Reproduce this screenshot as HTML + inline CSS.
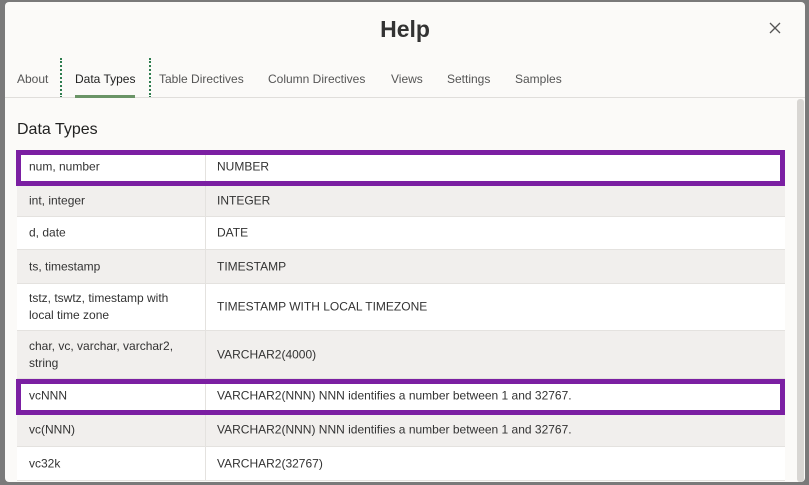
<!DOCTYPE html>
<html><head><meta charset="utf-8"><style>
*{margin:0;padding:0;box-sizing:border-box}
body{width:809px;height:485px;background:#7a7a7a;font-family:"Liberation Sans",sans-serif;overflow:hidden;position:relative}
.dlg{position:absolute;left:5px;top:2px;width:800px;height:480px;background:#fbfaf8;border-radius:4px;overflow:hidden}
.title{position:absolute;left:0;width:800px;top:14px;text-align:center;font-size:23px;font-weight:bold;color:#333}
.x{position:absolute;left:764px;top:20px}
.tab{position:absolute;top:70px;font-size:12px;color:#555;white-space:nowrap}
.tabline{position:absolute;left:0;top:95px;width:800px;height:1px;background:#e0dedb}
.dot{position:absolute;top:56px;height:40px;border-left:2px dotted #2e7d4f}
.ul{position:absolute;left:70px;top:93px;width:60px;height:3px;background:#6a9466}
.h{position:absolute;left:12px;top:119px;font-size:16px;color:#222}
.sb{position:absolute;left:792px;top:97px;width:7px;height:383px;background:#d8d6d3;border-radius:3px}
.r{position:absolute;left:12px;width:768px;background:#fff;border-bottom:1px solid #e4e2df;font-size:12px;color:#333;line-height:17px}
.r.g{background:#f1efed}
.r div{position:absolute;top:50%;transform:translateY(-50%)}
.r .a{left:12px;width:165px}
.r .b{left:200px}
.r:before{content:"";position:absolute;left:188px;top:0;bottom:0;border-left:1px solid #e4e2df}
.box{position:absolute;left:11px;width:769px;border:5px solid #7b1fa2;pointer-events:none}
</style></head><body>
<div class="dlg">
<div class="title">Help</div>
<svg class="x" width="12" height="12" viewBox="0 0 12 12"><path d="M1 1L11 11M11 1L1 11" stroke="#555" stroke-width="1.3"/></svg>
<div class="tab" style="left:12px">About</div>
<div class="dot" style="left:55px"></div>
<div class="tab" style="left:70px;color:#222">Data Types</div>
<div class="dot" style="left:144px"></div>
<div class="tab" style="left:154px">Table Directives</div>
<div class="tab" style="left:263px">Column Directives</div>
<div class="tab" style="left:386px">Views</div>
<div class="tab" style="left:442px">Settings</div>
<div class="tab" style="left:510px">Samples</div>
<div class="tabline"></div>
<div class="ul"></div>
<div class="h">Data Types</div>
<div class="r" style="top:148px;height:35px"><div class="a">num, number</div><div class="b">NUMBER</div></div>
<div class="r g" style="top:183px;height:32px"><div class="a">int, integer</div><div class="b">INTEGER</div></div>
<div class="r" style="top:215px;height:33px"><div class="a">d, date</div><div class="b">DATE</div></div>
<div class="r g" style="top:248px;height:34px"><div class="a">ts, timestamp</div><div class="b">TIMESTAMP</div></div>
<div class="r" style="top:282px;height:47px"><div class="a">tstz, tswtz, timestamp with local time zone</div><div class="b">TIMESTAMP WITH LOCAL TIMEZONE</div></div>
<div class="r g" style="top:329px;height:48px"><div class="a">char, vc, varchar, varchar2, string</div><div class="b">VARCHAR2(4000)</div></div>
<div class="r" style="top:377px;height:34px"><div class="a">vcNNN</div><div class="b">VARCHAR2(NNN) NNN identifies a number between 1 and 32767.</div></div>
<div class="r g" style="top:411px;height:34px"><div class="a">vc(NNN)</div><div class="b">VARCHAR2(NNN) NNN identifies a number between 1 and 32767.</div></div>
<div class="r" style="top:445px;height:34px"><div class="a">vc32k</div><div class="b">VARCHAR2(32767)</div></div>
<div class="box" style="top:148px;height:36px"></div>
<div class="box" style="top:377px;height:36px"></div>
<div class="sb"></div>
</div>
</body></html>
